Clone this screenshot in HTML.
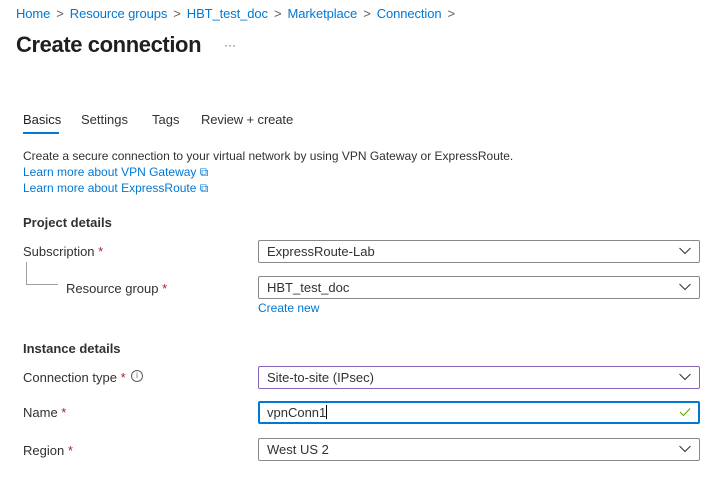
<!DOCTYPE html>
<html><head><style>
*{margin:0;padding:0;box-sizing:border-box}
body{width:714px;height:485px;background:#fff;font-family:"Liberation Sans",sans-serif;color:#323130;font-size:13px;position:relative;overflow:hidden}
.a{position:absolute;white-space:nowrap}
.bc{color:#0078d4;font-size:13px;top:6px;left:16px;letter-spacing:-0.1px}
.bc span.s{color:#605e5c;margin:0 6px}
.link{color:#0078d4}
.star{color:#a4262c}
.box{position:absolute;left:258px;width:442px;height:23px;border:1px solid #8a8886;border-radius:2px;padding-left:8px;line-height:21px;font-size:13px;color:#323130}
.chev{position:absolute;right:8px;top:6px;width:12px;height:8px}
h3{font-weight:bold;font-size:13px}
</style></head><body>
<div class="a bc">Home<span class="s">&gt;</span>Resource groups<span class="s">&gt;</span>HBT_test_doc<span class="s">&gt;</span>Marketplace<span class="s">&gt;</span>Connection<span class="s">&gt;</span></div>
<div class="a" style="left:16px;top:32px;font-size:22px;font-weight:bold;color:#201f1e;letter-spacing:-0.4px">Create connection</div>
<div class="a" style="left:224px;top:38px;font-size:12px;color:#605e5c">···</div>
<div class="a" style="left:23px;top:112px;color:#201f1e">Basics</div>
<div class="a" style="left:23px;top:132px;width:36px;height:2px;background:#0078d4"></div>
<div class="a" style="left:81px;top:112px">Settings</div>
<div class="a" style="left:152px;top:112px">Tags</div>
<div class="a" style="left:201px;top:112px;letter-spacing:-0.1px">Review + create</div>
<div class="a" style="left:23px;top:149px;font-size:12px">Create a secure connection to your virtual network by using VPN Gateway or ExpressRoute.</div>
<div class="a link" style="left:23px;top:165px;font-size:12px">Learn more about VPN Gateway ⧉</div>
<div class="a link" style="left:23px;top:181px;font-size:12px">Learn more about ExpressRoute ⧉</div>
<h3 class="a" style="left:23px;top:215px">Project details</h3>
<div class="a" style="left:23px;top:244px">Subscription <span class="star">*</span></div>
<div class="a" style="left:26px;top:262px;width:1px;height:22px;background:#a19f9d"></div>
<div class="a" style="left:26px;top:284px;width:32px;height:1px;background:#a19f9d"></div>
<div class="a" style="left:66px;top:281px">Resource group <span class="star">*</span></div>
<div class="box" style="top:240px">ExpressRoute-Lab<svg class="chev" viewBox="0 0 12 8"><path d="M0.5 1 L6 6.5 L11.5 1" fill="none" stroke="#323130" stroke-width="1"/></svg></div>
<div class="box" style="top:276px">HBT_test_doc<svg class="chev" viewBox="0 0 12 8"><path d="M0.5 1 L6 6.5 L11.5 1" fill="none" stroke="#323130" stroke-width="1"/></svg></div>
<div class="a link" style="left:258px;top:301px;font-size:12px">Create new</div>
<h3 class="a" style="left:23px;top:341px">Instance details</h3>
<div class="a" style="left:23px;top:370px">Connection type <span class="star">*</span></div>
<div class="a" style="left:131px;top:370px;width:12px;height:12px;border:1px solid #605e5c;border-radius:50%;font-size:8px;line-height:10px;text-align:center;color:#605e5c">i</div>
<div class="box" style="top:366px;border-color:#8764b8">Site-to-site (IPsec)<svg class="chev" viewBox="0 0 12 8"><path d="M0.5 1 L6 6.5 L11.5 1" fill="none" stroke="#323130" stroke-width="1"/></svg></div>
<div class="a" style="left:23px;top:405px">Name <span class="star">*</span></div>
<div class="box" style="top:401px;border:2px solid #0078d4;padding-left:7px;line-height:19px">vpnConn1<span style="display:inline-block;width:1px;height:14px;background:#000;vertical-align:-2px"></span><svg class="chev" viewBox="0 0 12 8" style="top:5px;right:7px"><path d="M1 4 L4.5 7.5 L11 0.5" fill="none" stroke="#57a300" stroke-width="1"/></svg></div>
<div class="a" style="left:23px;top:443px">Region <span class="star">*</span></div>
<div class="box" style="top:438px">West US 2<svg class="chev" viewBox="0 0 12 8"><path d="M0.5 1 L6 6.5 L11.5 1" fill="none" stroke="#323130" stroke-width="1"/></svg></div>
</body></html>
